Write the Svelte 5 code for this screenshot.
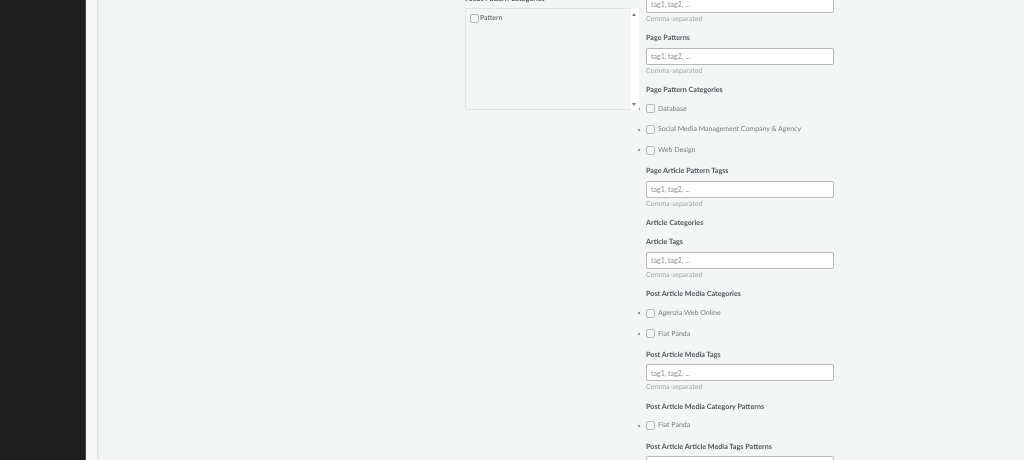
<script>
	const taxonomies = [
		{ label: 'Page Patterns', tags: true },
		{ label: 'Page Pattern Categories', terms: ['Database', 'Social Media Management Company & Agency', 'Web Design'] },
		{ label: 'Page Article Pattern Tagss', tags: true },
		{ label: 'Article Categories' },
		{ label: 'Article Tags', tags: true },
		{ label: 'Post Article Media Categories', terms: ['Agenzia Web Online', 'Fiat Panda'] },
		{ label: 'Post Article Media Tags', tags: true },
		{ label: 'Post Article Media Category Patterns', terms: ['Fiat Panda'] },
		{ label: 'Post Article Article Media Tags Patterns', tags: true }
	];
</script>

<div class="page">
	<aside class="sidebar"></aside>
	<div class="gutter"></div>
	<main class="content">
		<section class="left">
			<h4 class="cut-label">Focus Pattern Categories</h4>
			<div class="listbox">
				<label class="pick">
					<input type="checkbox" />
					<span>Pattern</span>
				</label>
				<div class="scrollbar">
					<span class="arrow up"></span>
					<span class="arrow down"></span>
				</div>
			</div>
		</section>

		<section class="right">
			<div class="field">
				<input class="text" type="text" placeholder="tag1, tag2, ..." />
				<p class="hint">Comma-separated</p>
			</div>
			{#each taxonomies as tax}
				<div class="field">
					<h4>{tax.label}</h4>
					{#if tax.tags}
						<input class="text" type="text" placeholder="tag1, tag2, ..." />
						<p class="hint">Comma-separated</p>
					{/if}
					{#if tax.terms}
						<ul>
							{#each tax.terms as term}
								<li><input type="checkbox" />{term}</li>
							{/each}
						</ul>
					{/if}
				</div>
			{/each}
		</section>
	</main>
</div>

<style>
	:global(body) {
		margin: 0;
		background: #f4f6f5;
	}

	.page {
		display: flex;
		height: 460px;
		overflow: hidden;
		font-family: 'Lato', 'Noto Sans', sans-serif;
		font-size: 7px;
		text-rendering: geometricPrecision;
		color: #50575e;
		filter: blur(0.3px);
	}

	.sidebar {
		width: 85px;
		flex-shrink: 0;
		background: #1e1e1e;
		border-right: 1px solid #444;
	}

	.gutter {
		width: 11px;
		flex-shrink: 0;
		background: #f6f7f7;
		border-right: 2px solid #e4e6e6;
	}

	.content {
		flex: 1;
		display: flex;
		padding-left: 366px;
		background: #f4f6f5;
	}

	.left {
		width: 174px;
		flex-shrink: 0;
		margin-top: -8px;
	}

	.cut-label {
		margin: 0 0 2px;
	}

	.listbox {
		position: relative;
		height: 102px;
		box-sizing: border-box;
		border: 1px solid #e2e4e4;
		border-radius: 2px;
		padding: 5px 4px;
	}

	.pick {
		display: flex;
		align-items: flex-start;
		gap: 1px;
		line-height: 8px;
	}

	.scrollbar {
		position: absolute;
		top: -1px;
		right: -1px;
		bottom: -1px;
		width: 8px;
		background: #fff;
	}

	.arrow {
		position: absolute;
		left: 1px;
		border-left: 2.5px solid transparent;
		border-right: 2.5px solid transparent;
	}

	.arrow.up {
		top: 5px;
		border-bottom: 3px solid #777b80;
	}

	.arrow.down {
		bottom: 4px;
		border-top: 3px solid #777b80;
	}

	.right {
		margin-left: 7px;
		width: 188px;
		flex-shrink: 0;
		margin-top: -4.5px;
	}

	.field {
		margin-bottom: 5px;
	}

	h4 {
		margin: 0 0 2.5px;
		font-size: 7.2px;
		line-height: 14px;
		font-weight: 700;
		color: #50575e;
	}

	.text {
		display: block;
		width: 100%;
		height: 17px;
		box-sizing: border-box;
		margin: 0;
		border: 1px solid #b4b8ba;
		border-radius: 2px;
		background: #fff;
		padding: 0 4px;
		font: inherit;
		outline: none;
	}

	.text::placeholder {
		color: #8a8f94;
		opacity: 1;
	}

	.hint {
		margin: 0;
		padding-bottom: 1px;
		line-height: 12.5px;
		color: #a0a5aa;
	}

	ul {
		margin: -1px 0 -1.5px;
		padding: 0;
		list-style: none;
	}

	li {
		height: 20.8px;
		line-height: 20.8px;
		color: #787c82;
	}

	li::before {
		content: '';
		display: inline-block;
		vertical-align: middle;
		width: 2px;
		height: 2px;
		margin: 0 6px 0 -8px;
		border-radius: 50%;
		background: #6c7278;
	}

	input[type='checkbox'] {
		appearance: none;
		display: inline-block;
		vertical-align: middle;
		width: 9px;
		height: 9px;
		box-sizing: border-box;
		margin: 0 3px 0 0;
		border: 1px solid #b4b8ba;
		border-radius: 2px;
		background: transparent;
	}

	.pick input[type='checkbox'] {
		margin: 0;
	}
</style>
